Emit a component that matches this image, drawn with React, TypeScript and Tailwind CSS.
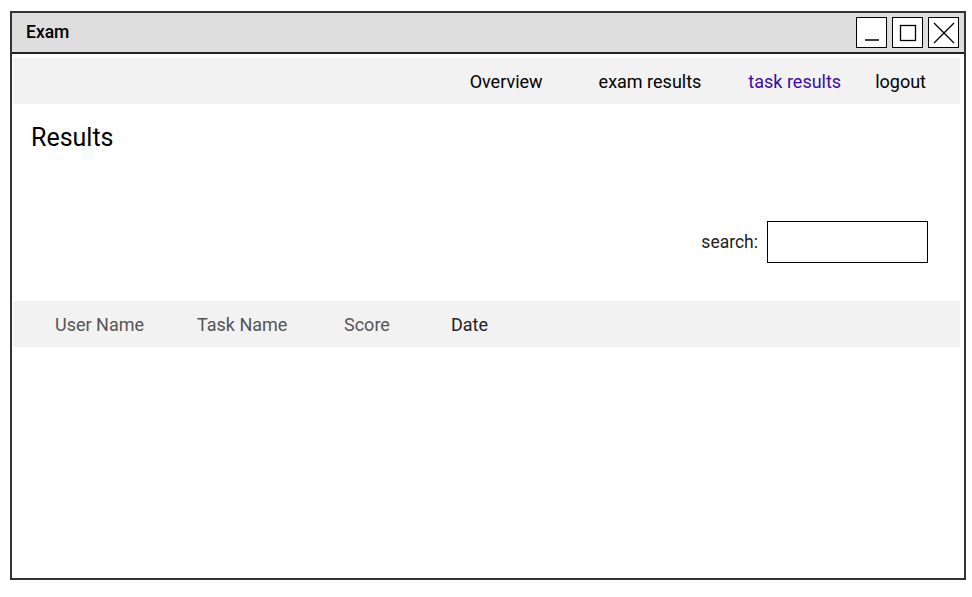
import React from "react";

const navItems = [
  { label: "Overview", active: false },
  { label: "exam results", active: false },
  { label: "task results", active: true },
  { label: "logout", active: false },
];

const columns = [
  { label: "User Name", w: "w-[142px]", dark: false },
  { label: "Task Name", w: "w-[147px]", dark: false },
  { label: "Score", w: "w-[107px]", dark: false },
  { label: "Date", w: "w-[100px]", dark: true },
];

function WinButton({ children }: { children: React.ReactNode }) {
  return (
    <div className="w-[31px] h-[31px] border-[1.5px] border-black bg-white flex items-center justify-center">
      {children}
    </div>
  );
}

export default function App() {
  return (
    <div className="w-[972px] h-[597px] bg-white pt-[11px] pl-[10px]" style={{ fontFamily: "Roboto, 'Noto Sans', sans-serif" }}>
      <div className="w-[956px] h-[569px] border-2 border-[#333] flex flex-col">
        {/* Title bar */}
        <div className="h-[41px] bg-[#dedede] border-b-2 border-[#222] flex items-center justify-between pl-[14px] pr-[5px] shrink-0">
          <span className="text-[17.5px] font-medium text-black">Exam</span>
          <div className="flex gap-[5px]">
            <WinButton>
              <svg width="20" height="20" viewBox="0 0 20 20">
                <line x1="3" y1="17" x2="17" y2="17" stroke="black" strokeWidth="1.5" />
              </svg>
            </WinButton>
            <WinButton>
              <svg width="20" height="20" viewBox="0 0 20 20">
                <rect x="2.5" y="2.5" width="15" height="15" fill="none" stroke="black" strokeWidth="1.3" />
              </svg>
            </WinButton>
            <WinButton>
              <svg width="24" height="24" viewBox="0 0 24 24">
                <line x1="2" y1="2" x2="22" y2="22" stroke="black" strokeWidth="1.3" />
                <line x1="22" y1="2" x2="2" y2="22" stroke="black" strokeWidth="1.3" />
              </svg>
            </WinButton>
          </div>
        </div>

        {/* Content */}
        <div className="flex-1 flex flex-col pl-[1px] pr-[4px] pt-[4px]">
          <nav className="h-[46px] bg-[#f2f2f2] flex items-center justify-end pr-[34px] text-[18px]">
            <div className="flex items-center">
              {navItems.map((item, i) => (
                <span
                  key={item.label}
                  className={
                    (item.active ? "text-[#3a0ca3]" : "text-black") +
                    (i === 0 ? " mr-[56px]" : i === 1 ? " mr-[47px]" : i === 2 ? " mr-[34px]" : "")
                  }
                >
                  {item.label}
                </span>
              ))}
            </div>
          </nav>

          <h1 className="text-[25px] text-black pl-[18px] mt-[18px] leading-[32px]">Results</h1>

          <div className="flex items-center justify-end mt-[67px] pr-[32px]">
            <span className="text-[17.5px] text-[#222] mr-[9px]">search:</span>
            <input className="w-[161px] h-[42px] border border-black outline-none" />
          </div>

          <div className="h-[46px] bg-[#f2f2f2] mt-[38px] flex items-center pl-[42px] text-[18px]">
            {columns.map((c) => (
              <span key={c.label} className={c.w + " " + (c.dark ? "text-[#222]" : "text-[#555]")}>
                {c.label}
              </span>
            ))}
          </div>
        </div>
      </div>
    </div>
  );
}
